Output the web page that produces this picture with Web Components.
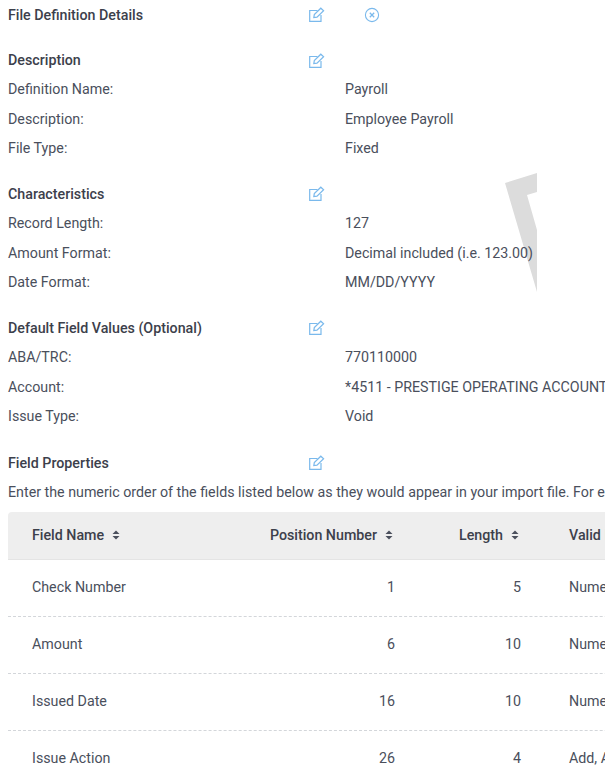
<!DOCTYPE html>
<html><head><meta charset="utf-8">
<style>
html,body{margin:0;padding:0;background:#fff;overflow:hidden;height:768px;width:605px}
body{font-family:Roboto,"Liberation Sans",sans-serif;font-size:14.25px;color:#4a4f5c}
</style></head><body>
<template id="t-edit"><style>:host{display:inline-flex;width:16px;height:16px;margin:1px 0 0 0}svg{display:block}</style>
<svg width="16" height="16" viewBox="0 0 16 16" fill="none" stroke="#7ab9ec" stroke-width="1.2"><path d="M8.5 3.5H.7V14.4H12V8"/><path d="M4.8 10.6 5.3 7.6 11.8 1.2 14.6 3.8 8 10.2Z"/></svg></template>
<template id="t-close"><style>:host{display:inline-flex;width:16px;height:16px;margin-top:1px}svg{display:block}</style>
<svg width="16" height="16" viewBox="0 0 16 16" fill="none" stroke="#7ab9ec" stroke-width="1.1"><circle cx="8" cy="8" r="6.6"/><path d="M5.8 5.8 10.2 10.2M10.2 5.8 5.8 10.2" stroke-width="1.3"/></svg></template>
<template id="t-head"><style>
:host{display:flex;align-items:center;height:29.6px;box-sizing:border-box;padding-top:1px;font-weight:500;color:#3c404b;white-space:nowrap}
.l{width:301px;flex:none}.e{width:55px;display:flex;flex:none}
</style><div class="l"><slot></slot></div><div class="e"><x-edit></x-edit></div><slot name="extra"></slot></template>
<template id="t-row"><style>
:host{display:flex;align-items:center;height:29.6px;white-space:nowrap}
.l{width:337px;flex:none}
</style><div class="l"><slot name="k"></slot></div><div><slot name="v"></slot></div></template>
<template id="t-sec"><style>:host{display:block;margin-bottom:var(--mb,15.5px)}</style><slot></slot></template>
<template id="t-table"><style>
:host{display:block;width:700px;margin-top:5px}
.w{border-radius:4px 4px 0 0;overflow:hidden}
</style><div class="w"><slot></slot></div></template>
<template id="t-hrow"><style>
:host{display:grid;grid-template-columns:228px 159px 126px 1fr;height:46px;padding-bottom:1px;align-items:center;background:#eeeeee;border-bottom:1px solid #e4e4e4;font-weight:500;color:#3c404b;white-space:nowrap}
</style><slot></slot></template>
<template id="t-trow"><style>
:host{display:grid;grid-template-columns:228px 159px 126px 1fr;height:54.6px;padding-bottom:1.4px;align-items:center;border-bottom:1px dashed #d3d6da;white-space:nowrap}
</style><slot></slot></template>
<template id="t-cell"><style>
:host{display:flex;align-items:center;gap:8px}
:host([first]){padding-left:24px}
:host([num]){justify-content:flex-end}
:host([sorted]){padding-right:2px}
:host([last]){padding-left:48px}
</style><slot></slot></template>
<template id="t-sort"><style>:host{display:inline-flex}svg{display:block}</style>
<svg width="8" height="10" viewBox="0 0 8 10" fill="#4a4f5c"><path d="M4 0.5 7.5 4H.5Z"/><path d="M4 9.5 .5 6H7.5Z"/></svg></template>
<template id="t-mark"><style>:host{position:absolute;left:505px;top:172px;display:block;z-index:-1}svg{display:block}</style>
<svg width="32" height="121" viewBox="0 0 32 121"><path d="M0 11 32 1V20L22 23 32 58V120Z" fill="#dcdcdc"/></svg></template>

<file-page>
<x-mark></x-mark>
<x-sec style="--mb:1px;margin-top:-.6px"><x-head>File Definition Details<x-close slot="extra"></x-close></x-head></x-sec>
<x-sec style="margin-top:15.8px"><x-head>Description</x-head>
<x-row><span slot="k">Definition Name:</span><span slot="v">Payroll</span></x-row>
<x-row><span slot="k">Description:</span><span slot="v">Employee Payroll</span></x-row>
<x-row><span slot="k">File Type:</span><span slot="v">Fixed</span></x-row></x-sec>
<x-sec><x-head>Characteristics</x-head>
<x-row><span slot="k">Record Length:</span><span slot="v">127</span></x-row>
<x-row><span slot="k">Amount Format:</span><span slot="v">Decimal included (i.e. 123.00)</span></x-row>
<x-row><span slot="k">Date Format:</span><span slot="v">MM/DD/YYYY</span></x-row></x-sec>
<x-sec style="--mb:16.5px"><x-head>Default Field Values (Optional)</x-head>
<x-row><span slot="k">ABA/TRC:</span><span slot="v">770110000</span></x-row>
<x-row><span slot="k">Account:</span><span slot="v">*4511 - PRESTIGE OPERATING ACCOUNT</span></x-row>
<x-row><span slot="k">Issue Type:</span><span slot="v">Void</span></x-row></x-sec>
<x-sec style="--mb:0"><x-head>Field Properties</x-head>
<x-row><span slot="k">Enter the numeric order of the fields listed below as they would appear in your import file. For example</span></x-row>
<x-table>
<x-hrow><x-cell first>Field Name <x-sort></x-sort></x-cell><x-cell num sorted>Position Number <x-sort></x-sort></x-cell><x-cell num sorted>Length <x-sort></x-sort></x-cell><x-cell last>Valid Data</x-cell></x-hrow>
<x-trow><x-cell first>Check Number</x-cell><x-cell num>1</x-cell><x-cell num>5</x-cell><x-cell last>Numeric</x-cell></x-trow>
<x-trow><x-cell first>Amount</x-cell><x-cell num>6</x-cell><x-cell num>10</x-cell><x-cell last>Numeric</x-cell></x-trow>
<x-trow><x-cell first>Issued Date</x-cell><x-cell num>16</x-cell><x-cell num>10</x-cell><x-cell last>Numeric</x-cell></x-trow>
<x-trow><x-cell first>Issue Action</x-cell><x-cell num>26</x-cell><x-cell num>4</x-cell><x-cell last>Add, Add</x-cell></x-trow>
</x-table></x-sec>
</file-page>
<script>
const reg=(n,t)=>customElements.define(n,class extends HTMLElement{constructor(){super();this.attachShadow({mode:'open'}).appendChild(document.getElementById(t).content.cloneNode(true));}});
[['x-edit','t-edit'],['x-close','t-close'],['x-head','t-head'],['x-row','t-row'],['x-sec','t-sec'],['x-table','t-table'],['x-hrow','t-hrow'],['x-trow','t-trow'],['x-cell','t-cell'],['x-sort','t-sort'],['x-mark','t-mark']].forEach(a=>reg(...a));
customElements.define('file-page',class extends HTMLElement{constructor(){super();this.attachShadow({mode:'open'}).innerHTML='<style>:host{display:block;padding:0 0 0 8px;width:597px;overflow:hidden;height:768px;position:relative;z-index:0}</style><slot></slot>';}});
</script>
</body></html>
